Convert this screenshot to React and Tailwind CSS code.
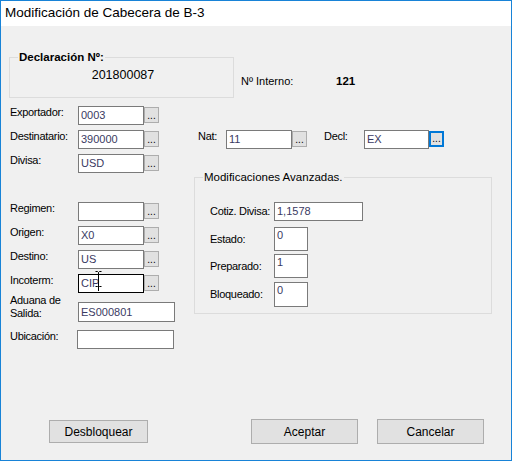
import React from "react";

const font = { fontFamily: '"Liberation Sans", Arial, sans-serif' };

function TextBox({ w, h = 19, value, focused, multiline, children }) {
  return (
    <div
      className={`relative shrink-0 bg-white border ${focused ? "border-black" : "border-[#7a7a7a]"} text-[11px] text-[#3a3a62] pl-[2px] flex ${multiline ? "items-start pt-[1px]" : "items-center"}`}
      style={{ width: w, height: h }}
    >
      <span className="leading-[13px]">{value}</span>
      {children}
    </div>
  );
}

function Dots({ focused }) {
  return (
    <div
      className={`shrink-0 mt-[1px] w-[15px] h-[16px] bg-[#e1e1e1] flex items-end justify-center text-[10px] leading-[10px] text-black ${focused ? "border-2 border-[#0078d7]" : "border border-[#adadad]"}`}
    >
      <span className="pb-[1px]">...</span>
    </div>
  );
}

function Label({ w, children, className = "" }) {
  return (
    <div
      className={`shrink-0 whitespace-nowrap text-[11px] tracking-[-0.3px] leading-[13px] text-black ${className}`}
      style={{ width: w }}
    >
      {children}
    </div>
  );
}

function Row({ label, value, dots = true, mt, focused, w = 66, labelW = 68, children, extra }) {
  return (
    <div className="flex items-start h-[19px] ml-[1px]" style={{ marginTop: mt }}>
      <Label w={labelW}>{label}</Label>
      <TextBox w={w} value={value} focused={focused}>
        {children}
      </TextBox>
      {dots && <Dots />}
      {extra}
    </div>
  );
}

function Button({ w, h, children, className = "" }) {
  return (
    <div
      className={`shrink-0 bg-[#e1e1e1] border border-[#adadad] flex items-center justify-center text-[12px] text-black ${className}`}
      style={{ width: w, height: h }}
    >
      {children}
    </div>
  );
}

export default function App() {
  return (
    <div
      className="w-[512px] h-[461px] border border-[#1883d7] bg-[#f0f0f0] flex flex-col overflow-hidden"
      style={font}
    >
      <div className="h-[25px] shrink-0 bg-white flex items-center pl-[4px] text-[13.5px] text-black">
        Modificación de Cabecera de B-3
      </div>
      <div className="flex-1 flex flex-col pl-[8px]">
        {/* Declaración group + Nº Interno */}
        <div className="flex items-start mt-[31px]">
          <div className="relative w-[225px] h-[41px] border border-[#dcdcdc]">
            <div className="absolute -top-[8px] left-[8px] bg-[#f0f0f0] px-[1px] text-[11.5px] leading-[14px] font-bold text-black">
              Declaración Nº:
            </div>
            <div className="pt-[10px] text-center text-[12.5px] leading-[14px] text-black pl-[3px]">
              201800087
            </div>
          </div>
          <div className="flex mt-[17px] ml-[7px] text-[11px] leading-[14px] text-black">
            <div className="w-[95px]">Nº Interno:</div>
            <div className="font-bold text-[11.5px]">121</div>
          </div>
        </div>

        <Row label="Exportador:" value="0003" mt={8} />
        <Row
          label="Destinatario:"
          value="390000"
          mt={5}
          extra={
            <>
              <Label w={28} className="ml-[39px]">Nat:</Label>
              <TextBox w={66} value="11" />
              <Dots />
              <Label w={40} className="ml-[17px]">Decl:</Label>
              <TextBox w={65} value="EX" />
              <Dots focused />
            </>
          }
        />
        <Row label="Divisa:" value="USD" mt={5} />

        {/* Lower section */}
        <div className="flex items-start mt-[4px]">
          <div className="w-[185px] shrink-0 pt-[25px] flex flex-col">
            <Row label="Regimen:" value="" mt={0} />
            <Row label="Origen:" value="X0" mt={5} />
            <Row label="Destino:" value="US" mt={5} />
            <Row label="Incoterm:" value="CIP" mt={5} focused>
              <svg
                className="absolute left-[16px] -top-[4px]"
                width="7"
                height="16"
                viewBox="0 0 7 16"
              >
                <path d="M0.5 0.5 H2.5 L3.5 1.5 L4.5 0.5 H6.5 M3.5 1.5 V14.5 M0.5 15.5 H2.5 L3.5 14.5 L4.5 15.5 H6.5" stroke="#000" strokeWidth="1" fill="none" />
              </svg>
              <div className="absolute left-[19px] top-[3px] w-[1px] h-[13px] bg-black" />
            </Row>
            <div className="flex items-start h-[20px] ml-[1px] mt-[9px]">
              <Label w={68} className="-mt-[8px]">
                Aduana de
                <br />
                Salida:
              </Label>
              <TextBox w={97} h={20} value="ES000801" />
            </div>
            <div className="flex items-start h-[19px] ml-[1px] mt-[8px]">
              <Label w={67}>Ubicación:</Label>
              <TextBox w={97} h={19} value="" />
            </div>
          </div>

          <div className="relative w-[298px] h-[137px] shrink-0 border border-[#dcdcdc] pl-[15px] pt-[24px] flex flex-col">
            <div className="absolute -top-[7px] left-[8px] bg-[#f0f0f0] px-[1px] text-[11.5px] leading-[13px] text-black">
              Modificaciones Avanzadas.
            </div>
            <div className="flex items-center h-[19px]">
              <Label w={64}>Cotiz. Divisa:</Label>
              <TextBox w={89} h={19} value="1,1578" />
            </div>
            <div className="flex items-center mt-[6px]">
              <Label w={64}>Estado:</Label>
              <TextBox w={34} h={24} value="0" multiline />
            </div>
            <div className="flex items-center mt-[3px]">
              <Label w={64}>Preparado:</Label>
              <TextBox w={34} h={24} value="1" multiline />
            </div>
            <div className="flex items-center mt-[4px]">
              <Label w={64}>Bloqueado:</Label>
              <TextBox w={34} h={25} value="0" multiline />
            </div>
          </div>
        </div>

        {/* Buttons */}
        <div className="mt-auto mb-[16px] flex items-center">
          <Button w={99} h={23} className="ml-[40px]">Desbloquear</Button>
          <Button w={107} h={25} className="ml-[103px]">Aceptar</Button>
          <Button w={107} h={25} className="ml-[19px]">Cancelar</Button>
        </div>
      </div>
    </div>
  );
}
